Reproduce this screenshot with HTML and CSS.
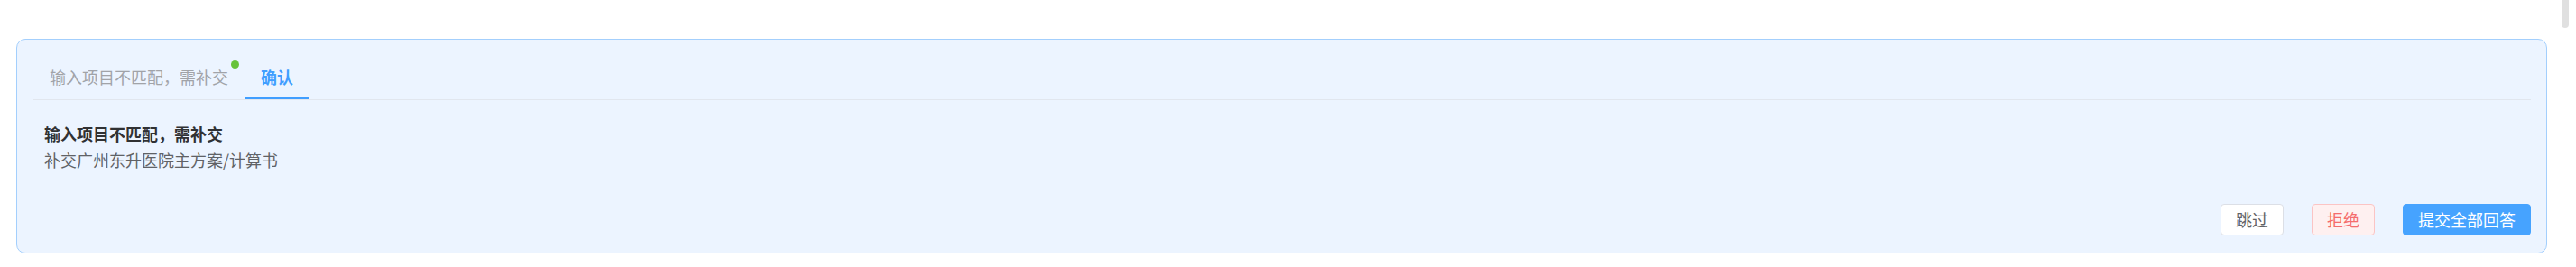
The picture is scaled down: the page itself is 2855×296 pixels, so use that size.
FILE: index.html
```html
<!DOCTYPE html>
<html lang="zh-CN">
<head>
<meta charset="utf-8">
<title>确认</title>
<link rel="stylesheet" href="styles.css">
</head>
<body>
<div class="page">
  <div class="card">
    <div class="tabs">
      <div class="tab tab-pending">输入项目不匹配，需补交<span class="dot"></span></div>
      <div class="tab tab-active">确认</div>
    </div>
    <div class="content">
      <div class="title">输入项目不匹配，需补交</div>
      <div class="desc">补交广州东升医院主方案/计算书</div>
    </div>
    <div class="actions">
      <button class="btn btn-default">跳过</button>
      <button class="btn btn-danger">拒绝</button>
      <button class="btn btn-primary">提交全部回答</button>
    </div>
  </div>
</div>
<div class="scroll-thumb"></div>
</body>
</html>
```

FILE: styles.css
```css
html, body {
  margin: 0;
  padding: 0;
  background: #ffffff;
  font-family: "Noto Sans CJK SC", "Noto Sans", "Liberation Sans", sans-serif;
}

.page {
  padding: 43px 32px 0 18px;
}

.card {
  background: #ecf4ff;
  border: 1px solid #a3cffd;
  border-radius: 10px;
  padding: 16px 17px 19px 18px;
  display: flex;
  flex-direction: column;
}

.tabs {
  display: flex;
  border-bottom: 1px solid #e1e6ee;
  height: 50px;
}

.tab {
  position: relative;
  padding: 0 18px;
  height: 50px;
  line-height: 50px;
  font-size: 18px;
  color: #a1a3a8;
}

.tab-active {
  color: #409eff;
  font-weight: bold;
  box-shadow: inset 0 -3px 0 #409eff;
}

.dot {
  position: absolute;
  left: 219px;
  top: 7px;
  width: 9px;
  height: 9px;
  border-radius: 50%;
  background: #67c23a;
}

.content {
  padding: 23px 12px 0 12px;
}

.title {
  font-size: 18px;
  line-height: 29px;
  font-weight: bold;
  color: #303133;
}

.desc {
  font-size: 18px;
  line-height: 29px;
  color: #606266;
}

.actions {
  display: flex;
  justify-content: flex-end;
  gap: 31px;
  margin-top: 34px;
}

.btn {
  height: 35px;
  padding: 0 16px;
  border-radius: 4px;
  font-family: inherit;
  font-size: 18px;
  line-height: 33px;
  border: 1px solid #dcdfe6;
  background: #ffffff;
  color: #606266;
  cursor: pointer;
}

.btn-danger {
  background: #fef0f0;
  border-color: #fbc4c4;
  color: #f56c6c;
}

.btn-primary {
  background: #46a3ff;
  border-color: #46a3ff;
  color: #ffffff;
}

.scroll-thumb {
  position: fixed;
  top: 0;
  left: 2839px;
  width: 8px;
  height: 31px;
  border-radius: 0 0 4px 4px;
  background: #e0e0e0;
}
```
